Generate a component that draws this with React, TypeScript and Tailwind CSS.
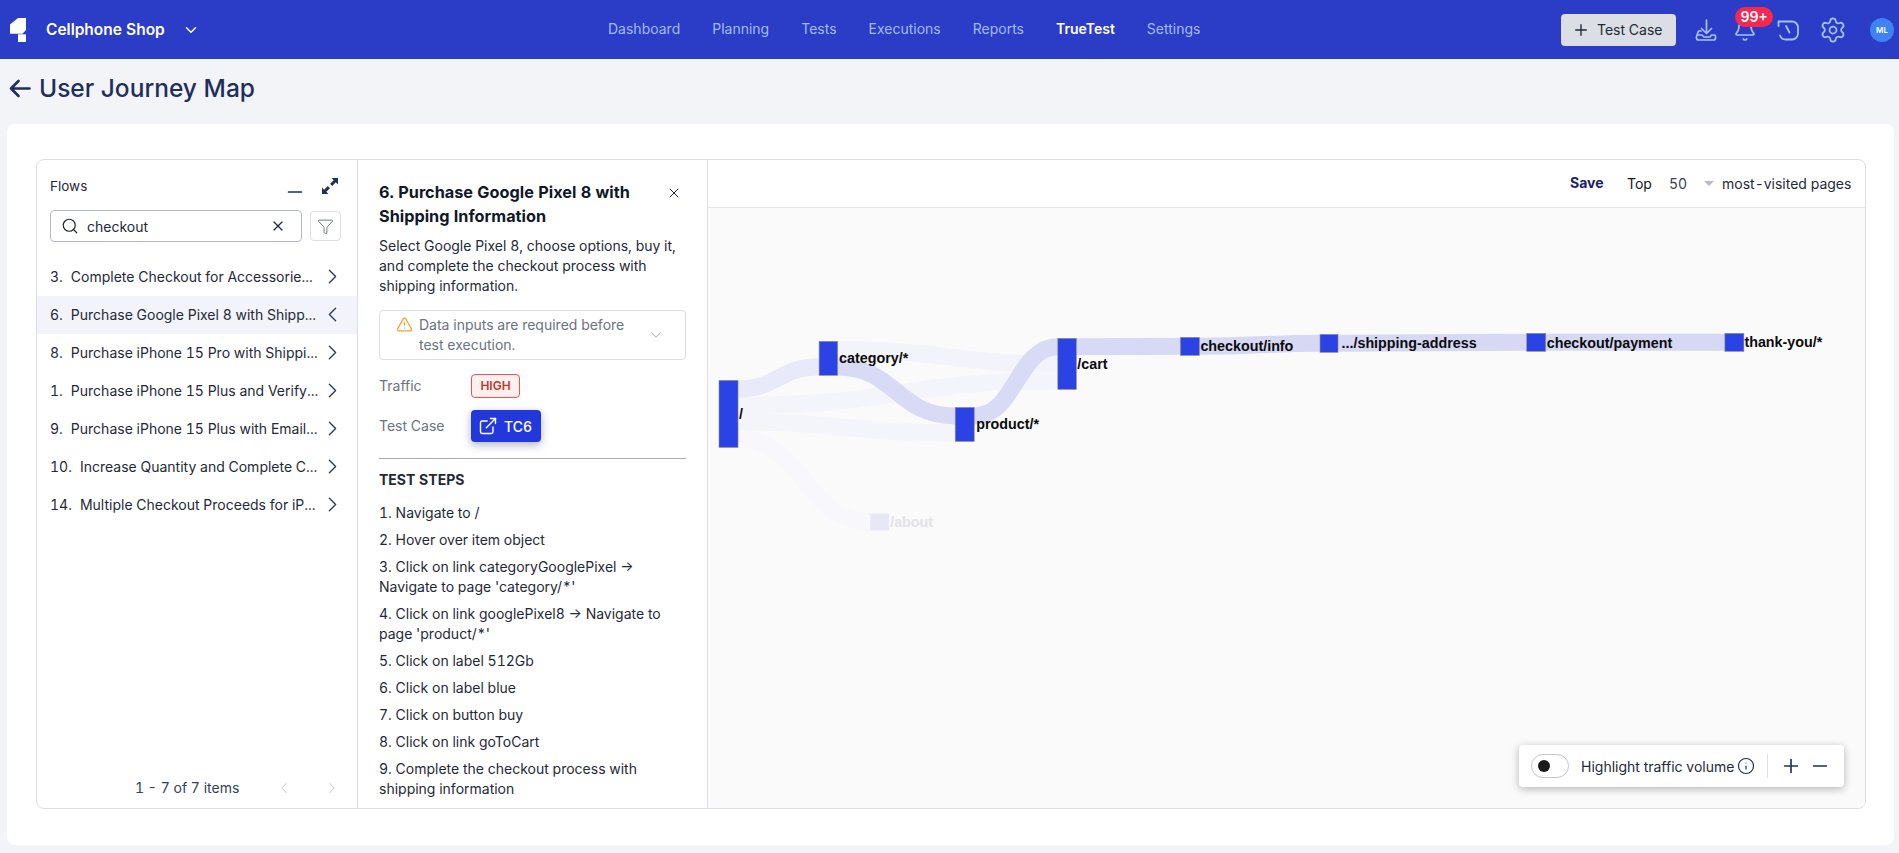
import React from "react";
import { ChevronDown, ChevronRight, ChevronLeft, Plus, Minus, Bell, Settings, Search, X, Filter, TriangleAlert, ExternalLink, Info } from "lucide-react";

const nav = [
  { t: "Dashboard" }, { t: "Planning" }, { t: "Tests" }, { t: "Executions" }, { t: "Reports" }, { t: "TrueTest", a: true }, { t: "Settings" },
];
const flows = [
  ["3.", "Complete Checkout for Accessorie..."],
  ["6.", "Purchase Google Pixel 8 with Shipp..."],
  ["8.", "Purchase iPhone 15 Pro with Shippi..."],
  ["1.", "Purchase iPhone 15 Plus and Verify..."],
  ["9.", "Purchase iPhone 15 Plus with Email..."],
  ["10.", "Increase Quantity and Complete C..."],
  ["14.", "Multiple Checkout Proceeds for iP..."],
];
const steps = [
  "1. Navigate to /",
  "2. Hover over item object",
  "3. Click on link categoryGooglePixel → Navigate to page 'category/*'",
  "4. Click on link googlePixel8 → Navigate to page 'product/*'",
  "5. Click on label 512Gb",
  "6. Click on label blue",
  "7. Click on button buy",
  "8. Click on link goToCart",
  "9. Complete the checkout process with shipping information",
];

function link(x1: number, y1: number, x2: number, y2: number) {
  const m = (x1 + x2) / 2;
  return `M${x1} ${y1}C${m} ${y1} ${m} ${y2} ${x2} ${y2}`;
}
const links = [
  { d: link(738, 406, 1058, 381.5), c: "#f4f4fb", w: 17 },
  { d: link(738, 422.5, 955, 433.5), c: "#f4f4fb", w: 17 },
  { d: link(738, 439.5, 870, 522.5), c: "#f7f7fc", w: 17 },
  { d: link(837, 350.5, 1058, 364.5), c: "#f3f3fb", w: 17 },
  { d: link(738, 389.5, 819, 367.5), c: "#e8e9f9", w: 17 },
  { d: link(837, 367.5, 955, 416.5), c: "#d9dbf6", w: 17 },
  { d: link(974, 416.5, 1058, 347.5), c: "#d9dbf6", w: 17 },
  { d: link(1076, 347.5, 1180, 347), c: "#d8daf5", w: 17 },
  { d: link(1199, 347, 1320, 344), c: "#d6d8f4", w: 17 },
  { d: link(1338, 344, 1526, 343), c: "#d6d8f4", w: 17 },
  { d: link(1545, 343, 1724, 343), c: "#d6d8f4", w: 17 },
];
const nodes = [
  { x: 719, y: 381, w: 19, h: 67 },
  { x: 819, y: 342, w: 18.5, h: 34 },
  { x: 955, y: 408, w: 19, h: 34 },
  { x: 1057.5, y: 339, w: 18.5, h: 51 },
  { x: 1180, y: 338, w: 19, h: 18 },
  { x: 1319.5, y: 335, w: 18, h: 18 },
  { x: 1526, y: 334, w: 19, h: 18 },
  { x: 1724, y: 334, w: 19, h: 18 },
];
const labels = [
  { t: "/", x: 739, y: 415 },
  { t: "category/*", x: 839, y: 359 },
  { t: "product/*", x: 976, y: 425 },
  { t: "/cart", x: 1077, y: 365 },
  { t: "checkout/info", x: 1200, y: 347 },
  { t: ".../shipping-address", x: 1341, y: 344 },
  { t: "checkout/payment", x: 1546, y: 344 },
  { t: "thank-you/*", x: 1743.5, y: 343 },
];

function Logo() {
  return (
    <svg width="16" height="24" viewBox="0 0 16 24" className="shrink-0">
      <path d="M8 0H16V12L12.5 15.7H0V6.6Z" fill="#fff" />
      <path d="M8 16.3H16V24H8Z" fill="#fff" />
    </svg>
  );
}
function DownloadIcon() {
  return (
    <svg width="24" height="24" viewBox="0 0 24 24" fill="none" stroke="#a9c1f8" strokeWidth="1.7" strokeLinecap="round" strokeLinejoin="round">
      <path d="M12.5 2v13M7.5 10.5l5 5 5-5" />
      <path d="M7 13H4.5L2.5 18.5V20a2 2 0 0 0 2 2h15a2 2 0 0 0 2-2v-2a1 1 0 0 0-1-1h-3l-1.5 2h-6L8 17H3" />
    </svg>
  );
}
function HistoryIcon() {
  return (
    <svg width="24" height="24" viewBox="0 0 24 24" fill="none" stroke="#a9c1f8" strokeWidth="1.8" strokeLinecap="round" strokeLinejoin="round">
      <path d="M2.5 8V3.5H16a6 6 0 0 1 6 6v6a6 6 0 0 1-6 6H9.5a6 6 0 0 1-5.5-4" />
      <path d="M10 8l3.5 6.5" />
    </svg>
  );
}

export default function App() {
  return (
    <div className="w-full h-[853px] overflow-hidden flex flex-col bg-[#f3f4f8] font-['Inter',sans-serif] text-[14px] text-[#1f2937] tabular-nums">
      <header className="h-[59px] shrink-0 bg-[#2b3cc7] flex items-center">
        <div className="w-[608px] shrink-0 flex items-center pl-[10px]">
          <Logo />
          <span className="ml-[20px] text-white font-semibold text-[15.5px]">Cellphone Shop</span>
          <ChevronDown size={18} strokeWidth={2} className="ml-[17px] text-white" />
        </div>
        <nav className="flex gap-[32px] mb-[2px]">
          {nav.map((n) => (
            <span key={n.t} className={n.a ? "text-white font-semibold" : "text-[#a3bbf7]"}>{n.t}</span>
          ))}
        </nav>
        <div className="ml-auto flex items-center">
          <button className="w-[115px] h-[32px] rounded bg-[#dcdee6] flex items-center pl-[11px] gap-[7px] text-[#1f2937]">
            <Plus size={18} strokeWidth={1.8} />
            <span>Test Case</span>
          </button>
          <div className="ml-[18px]"><DownloadIcon /></div>
          <div className="relative ml-[15px]">
            <Bell size={24} strokeWidth={1.7} className="text-[#a9c1f8]" />
            <span className="absolute left-[2px] top-[-11px] w-[38px] h-[20px] rounded-full bg-[#f5294f] text-white font-semibold text-[14px] flex items-center justify-center">99+</span>
          </div>
          <div className="ml-[19px]"><HistoryIcon /></div>
          <Settings size={28} strokeWidth={1.5} className="ml-[19px] text-[#a9c1f8]" />
          <div className="ml-[23px] mr-[5px] w-[24px] h-[24px] rounded-full bg-[#3f83f2] text-white text-[8px] font-semibold flex items-center justify-center">ML</div>
        </div>
      </header>

      <div className="h-[65px] shrink-0 flex items-center pl-[9px] pb-[6px]">
        <svg width="22" height="19" viewBox="0 0 22 19" fill="none" stroke="#1e2f5c" strokeWidth="2.6" strokeLinecap="round" strokeLinejoin="round">
          <path d="M20.5 9.5H2M9.5 2L2 9.5L9.5 17" />
        </svg>
        <h1 className="ml-[8px] text-[24.5px] font-medium text-[#1e2f5c]">User Journey Map</h1>
      </div>

      <div className="mx-[7px] mr-[5px] h-[721px] rounded-lg bg-white pl-[29px] pr-[28px] pt-[35px] pb-[36px]">
        <div className="h-[650px] rounded-lg border border-[#dcdee4] flex overflow-hidden">
          <aside className="w-[321px] shrink-0 border-r border-[#dcdee4] flex flex-col">
            <div className="px-[13px] pt-[16px] flex-1 flex flex-col">
              <div className="flex items-center h-[20px]">
                <span className="text-[#1f2937] text-[13.5px]">Flows</span>
                <Minus size={22} strokeWidth={1.9} className="ml-auto mt-[12px] mr-[15px] text-[#1e2f5c]" />
                <svg width="18" height="18" viewBox="0 0 18 18" className="mr-[5px]" fill="#1e2f5c">
                  <path d="M10.5 1H17V7.5L14.8 5.3L11.2 8.9L9.1 6.8L12.7 3.2Z" />
                  <path d="M1 10.5V17H7.5L5.3 14.8L8.9 11.2L6.8 9.1L3.2 12.7Z" />
                </svg>
              </div>
              <div className="mt-[14px] flex items-center gap-[8px]">
                <div className="w-[252px] h-[32px] rounded border border-[#b5b9c2] flex items-center pl-[10px] pr-[15px]">
                  <Search size={18} strokeWidth={1.6} className="text-[#1f2937] shrink-0" />
                  <span className="ml-[8px] flex-1">checkout</span>
                  <X size={16} strokeWidth={1.8} />
                </div>
                <div className="w-[31px] h-[30px] rounded border border-[#dcdee4] flex items-center justify-center">
                  <Filter size={17} strokeWidth={1.1} className="text-[#4b5563]" />
                </div>
              </div>
              <ul className="mt-[16px] mx-[-13px]">
                {flows.map((f, i) => (
                  <li key={f[0]} className={`h-[38px] flex items-center pl-[13px] pr-[12px] pb-[1px] ${i === 1 ? "bg-[#f3f4fb]" : ""}`}>
                    <span>{f[0]}</span>
                    <span className="ml-[8px] flex-1 whitespace-nowrap overflow-hidden">{f[1]}</span>
                    {i === 1 ? <ChevronLeft size={25} strokeWidth={1.3} className="text-[#2c3e60] shrink-0" /> : <ChevronRight size={25} strokeWidth={1.3} className="text-[#2c3e60] shrink-0" />}
                  </li>
                ))}
              </ul>
              <div className="mt-auto mb-[10px] flex items-center pl-[85px]">
                <span className="w-[139px] text-[#334155] whitespace-nowrap">1 - 7 of 7 items</span>
                <ChevronLeft size={18} strokeWidth={1.4} className="ml-[1px] text-[#c9ccd4]" />
                <ChevronRight size={18} strokeWidth={1.4} className="ml-[30px] text-[#c9ccd4]" />
              </div>
            </div>
          </aside>

          <section className="w-[350px] shrink-0 border-r border-[#dcdee4] pl-[21px] pr-[21px] pt-[20px] overflow-hidden">
            <div className="flex items-start">
              <h2 className="flex-1 pr-[20px] text-[16.25px] leading-[24px] font-bold text-[#111827]">6. Purchase Google Pixel 8 with Shipping Information</h2>
              <X size={16} strokeWidth={1.4} className="mt-[5px] mr-[4px] shrink-0 text-[#111827]" />
            </div>
            <p className="mt-[8px] leading-[20px] text-[#1f2937]">Select Google Pixel 8, choose options, buy it, and complete the checkout process with shipping information.</p>
            <div className="mt-[14px] h-[50px] rounded border border-[#dcdee4] flex items-center pl-[16px] pr-[20px]">
              <TriangleAlert size={17} strokeWidth={1.7} className="text-[#f59e2b] shrink-0 self-start mt-[5px]" />
              <span className="ml-[6px] flex-1 leading-[20px] text-[#6b7280]">Data inputs are required before test execution.</span>
              <ChevronDown size={18} strokeWidth={1.4} className="text-[#b4b8c1]" />
            </div>
            <div className="mt-[14px] flex items-center">
              <span className="w-[92px] mb-[1px] text-[#6b7280]">Traffic</span>
              <span className="h-[24px] w-[49px] rounded border border-[#ef5350] bg-[#fdf0ef] text-[#c0392b] text-[12px] font-semibold flex items-center justify-center">HIGH</span>
            </div>
            <div className="mt-[12px] flex items-center">
              <span className="w-[92px] mb-[1px] text-[#6b7280]">Test Case</span>
              <button className="h-[32px] w-[70px] rounded bg-[#2238dd] text-white font-medium shadow-[0_3px_8px_rgba(30,40,90,0.35)] flex items-center pl-[7px] gap-[6px]">
                <ExternalLink size={20} strokeWidth={1.7} />
                <span>TC6</span>
              </button>
            </div>
            <hr className="mt-[16px] border-[#a9abb0]" />
            <h3 className="mt-[11px] leading-[20px] font-bold text-[#1f2937]">TEST STEPS</h3>
            <ol className="mt-[13px] flex flex-col gap-[7px] leading-[20px] text-[#1f2937]">
              {steps.map((s) => (<li key={s}>{s}</li>))}
            </ol>
          </section>

          <main className="flex-1 flex flex-col min-w-0">
            <div className="h-[48px] shrink-0 border-b border-[#e3e4e8] flex items-center pl-[862px]">
              <span className="w-[57px] font-bold text-[#17226e] text-[14px] mb-[2px]">Save</span>
              <span className="w-[42px] text-[#111827]">Top</span>
              <span className="w-[35px] text-[#334155]">50</span>
              <span className="w-0 h-0 border-l-[5px] border-r-[5px] border-t-[5px] border-l-transparent border-r-transparent border-t-[#b9bcc5]" />
              <span className="ml-[8px] text-[#1f2937] whitespace-nowrap">most-visited pages</span>
            </div>
            <div className="relative flex-1 bg-[#fafafa]">
              <svg viewBox="708 209 1156 599" className="block w-full h-full">
                {links.map((l, i) => (
                  <path key={i} d={l.d} fill="none" stroke={l.c} strokeWidth={l.w} />
                ))}
                {nodes.map((n, i) => (
                  <rect key={i} x={n.x} y={n.y} width={n.w} height={n.h} fill="#2b42e4" stroke="#8b8d9c" strokeWidth="0.6" />
                ))}
                <rect x="870" y="514" width="19" height="17" fill="#e6e8f8" />
                {labels.map((l) => (
                  <text key={l.t} x={l.x} y={l.y} dominantBaseline="central" fontFamily="'Liberation Sans',sans-serif" fontWeight="700" fontSize="14.3" fill="#0b0b0b">{l.t}</text>
                ))}
                <text x="890" y="523" dominantBaseline="central" fontFamily="'Liberation Sans',sans-serif" fontWeight="700" fontSize="14.3" fill="#e2e2e6">/about</text>
              </svg>
              <div className="absolute right-[21px] bottom-[21px] w-[325px] h-[42px] rounded bg-white shadow-[0_2px_8px_rgba(0,0,0,0.28)] flex items-center pl-[12px]">
                <div className="w-[38px] h-[24px] rounded-full border border-[#c3c5cb] bg-white flex items-center pl-[6px]">
                  <span className="w-[12px] h-[12px] rounded-full bg-[#1a1a1a]" />
                </div>
                <span className="ml-[12px] text-[#1f2937] whitespace-nowrap">Highlight traffic volume</span>
                <Info size={18} strokeWidth={1.6} className="ml-[3px] text-[#1e2f5c]" />
                <span className="ml-[12px] h-[24px] w-px bg-[#dcdee4]" />
                <Plus size={22} strokeWidth={1.8} className="ml-[12px] text-[#1e2f5c]" />
                <Minus size={22} strokeWidth={1.8} className="ml-[7px] text-[#1e2f5c]" />
              </div>
            </div>
          </main>
        </div>
      </div>
    </div>
  );
}
